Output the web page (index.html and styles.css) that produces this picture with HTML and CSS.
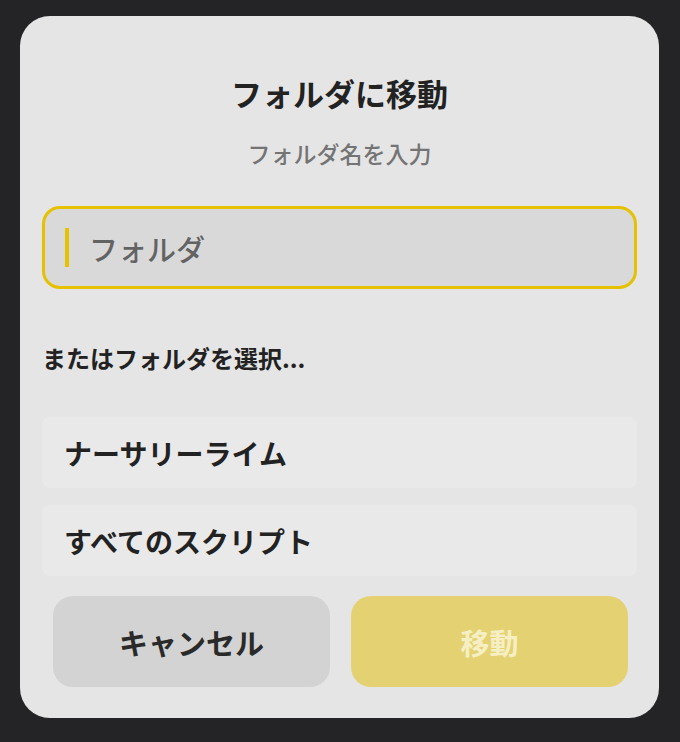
FILE: index.html
```html
<!DOCTYPE html>
<html lang="ja">
<head>
    <meta charset="UTF-8">
    <meta name="viewport" content="width=device-width, initial-scale=1.0">
    <title>フォルダに移動</title>
    <link rel="stylesheet" href="styles.css">
</head>
<body>
    <div class="dialog">
        <h1 class="title">フォルダに移動</h1>
        <p class="subtitle">フォルダ名を入力</p>

        <div class="field">
            <span class="caret"></span>
            <span class="placeholder">フォルダ</span>
        </div>

        <p class="label">またはフォルダを選択...</p>

        <ul class="folders">
            <li class="folder">ナーサリーライム</li>
            <li class="folder">すべてのスクリプト</li>
        </ul>

        <div class="actions">
            <button class="btn cancel">キャンセル</button>
            <button class="btn move" disabled>移動</button>
        </div>
    </div>
</body>
</html>
```

FILE: styles.css
```css
:root {
    --bg: #242426;
    --card: #e5e5e5;
    --accent: #e5c100;
    --text: #222222;
}

body {
    margin: 0;
    padding: 16px 21px 24px 20px;
    background-color: var(--bg);
    font-family: "Noto Sans CJK JP", "Noto Sans", sans-serif;
    color: var(--text);
}

.dialog {
    background: var(--card);
    border-radius: 30px;
    padding: 57px 22px 31px 22px;
}

.title {
    margin: 0;
    font-size: 31px;
    line-height: 40px;
    font-weight: 700;
    text-align: center;
    color: #222;
}

.subtitle {
    margin: 25px 0 0;
    font-size: 23px;
    line-height: 30px;
    font-weight: 500;
    text-align: center;
    color: #747474;
}

.field {
    margin-top: 38px;
    height: 77px;
    border: 3px solid var(--accent);
    border-radius: 18px;
    background: #d9d9d9;
    display: flex;
    align-items: center;
    padding-left: 20px;
    gap: 20px;
}

.caret {
    width: 4px;
    height: 39px;
    background: var(--accent);
}

.placeholder {
    font-size: 29px;
    font-weight: 500;
    color: #636363;
    line-height: 40px;
}

.label {
    margin: 54px 0 0;
    font-size: 24px;
    line-height: 30px;
    font-weight: 700;
    color: #222;
}

.folders {
    list-style: none;
    margin: 44px 0 0;
    padding: 0;
    display: flex;
    flex-direction: column;
    gap: 17px;
}

.folder {
    height: 71px;
    display: flex;
    align-items: center;
    padding-left: 22px;
    background: #e9e9e9;
    border-radius: 8px;
    font-size: 28px;
    font-weight: 700;
    color: #222;
}

.actions {
    margin-top: 20px;
    padding: 0 9px 0 11px;
    display: flex;
    gap: 21px;
}

.btn {
    flex: 1;
    height: 91px;
    border: none;
    border-radius: 20px;
    font-family: inherit;
    font-size: 29px;
    font-weight: 700;
    cursor: pointer;
}

.cancel {
    background: #d3d3d3;
    color: #2a2a2a;
}

.move {
    background: #e4d272;
    color: #f6efc4;
}
```
